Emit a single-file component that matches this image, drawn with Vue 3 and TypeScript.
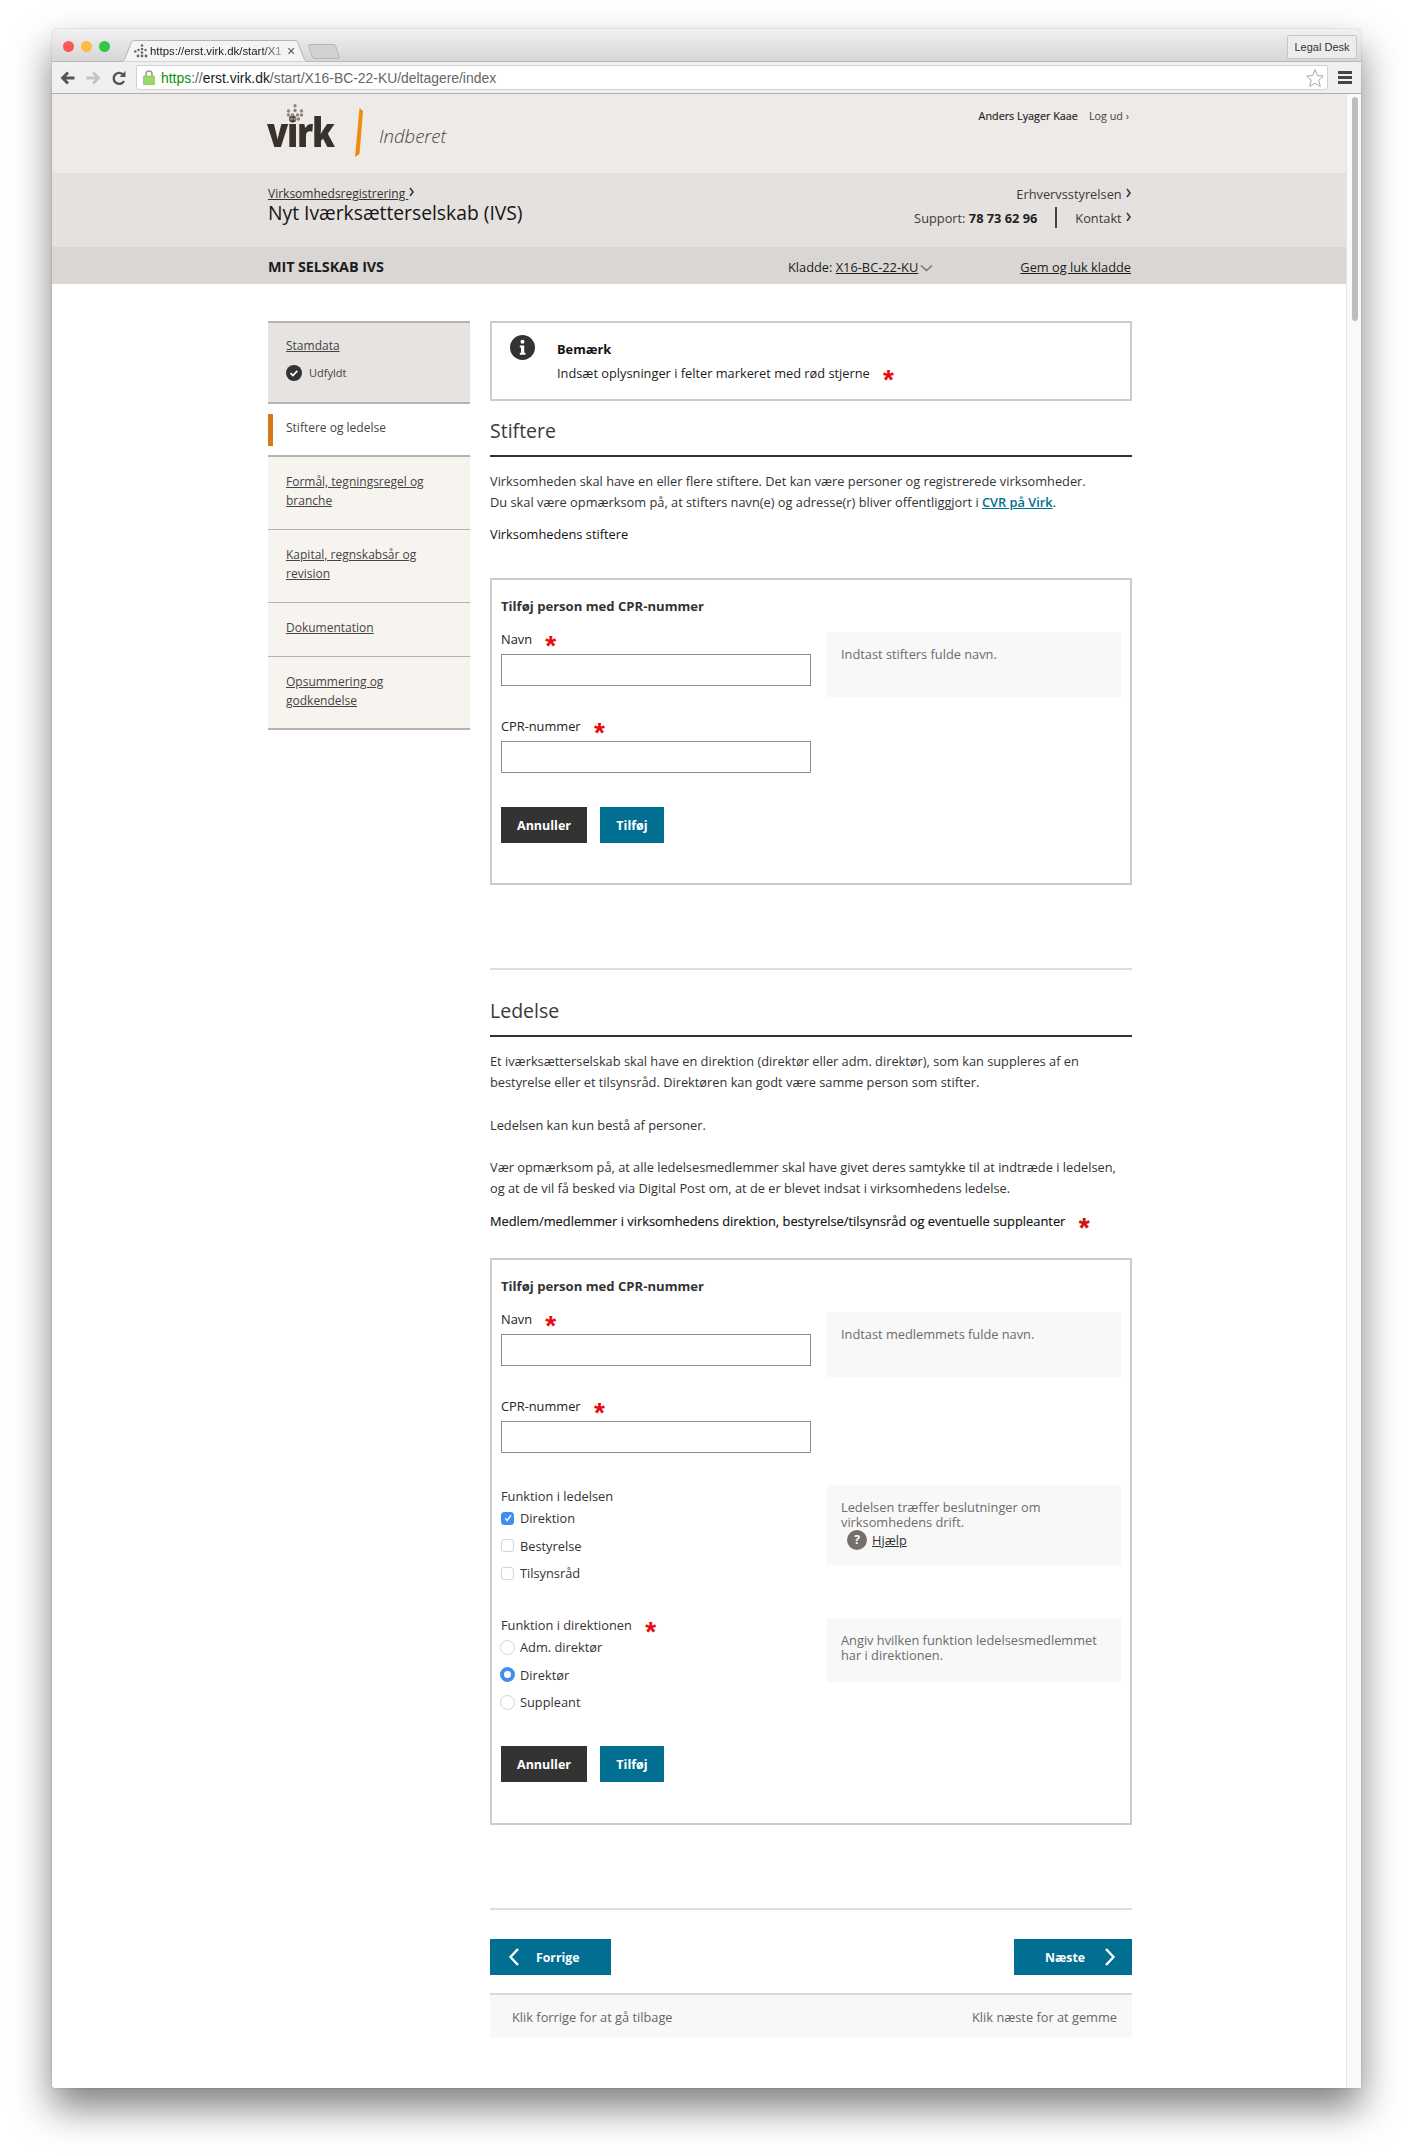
<template>
  <div class="stage">
    <div class="window">
      <div class="tabstrip">
        <div class="lights"><i class="red"></i><i class="yellow"></i><i class="green"></i></div>
        <div class="tab">
          <svg class="tab-bg" width="192" height="22" viewBox="0 0 192 22">
            <path d="M0 21.500h2c2 0 3-1 4-3L12 3c.6-1.600 1.600-2.500 3.500-2.500h160c2 0 3 1 3.500 2.500l6 15.500c1 2 2 3 4 3h3" fill="#f4f4f4" stroke="#b4b4b4" />
          </svg>
          <svg class="favicon" width="14" height="14" viewBox="0 0 14 14"><g fill="#666">
            <circle cx="8" cy="1.500" r="1.300" /><circle cx="8" cy="5" r="1.300" /><circle cx="4.500" cy="6" r="1.200" /><circle cx="11.500" cy="6" r="1.200" /><circle cx="1.300" cy="7.500" r="1.200" /><circle cx="8" cy="8.500" r="1.300" /><circle cx="4" cy="12" r="1.400" /><circle cx="8" cy="12" r="1.400" /><circle cx="12" cy="12" r="1.400" />
          </g></svg>
          <span class="tab-title">https://erst.virk.dk/start/X1</span>
          <span class="tab-close">×</span>
        </div>
        <div class="newtab"></div>
        <div class="legal">Legal Desk</div>
      </div>
      <div class="toolbar">
        <svg class="nav-icon" width="16" height="16" viewBox="0 0 16 16"><path d="M14.500 8H3M8 2.500 2.500 8 8 13.500" fill="none" stroke="#555" stroke-width="2.800" /></svg>
        <svg class="nav-icon fwd" width="16" height="16" viewBox="0 0 16 16"><path d="M1.500 8H13M8 2.500 13.500 8 8 13.500" fill="none" stroke="#c4c4c4" stroke-width="2.800" /></svg>
        <svg class="nav-icon reload" width="14" height="16" viewBox="0 0 14 16"><path d="M12 11a5.500 5.500 0 1 1-.6-6.200" fill="none" stroke="#555" stroke-width="2.400" /><path d="M13.500 1v6h-6z" fill="#555" /></svg>
        <div class="address">
          <svg width="12" height="15" viewBox="0 0 12 15"><path d="M3 7V4a3 3 0 0 1 6 0v3" fill="none" stroke="#9a9a9a" stroke-width="1.500" /><rect x=".5" y="6" width="11" height="9" rx="1" fill="#9bd968" stroke="#7cb84f" stroke-width=".6" /></svg>
          <span class="url"><span class="https">https</span><span class="muted">://</span>erst.virk.dk<span class="muted">/start/X16-BC-22-KU/deltagere/index</span></span>
          <svg class="star" width="18" height="20" viewBox="0 0 18 20"><path d="m9 1.500 2.400 6.100 6 .4-4.600 4.200 1.500 6.300L9 15.200l-5.300 3.300 1.500-6.300L.6 8l6-.4z" fill="#fff" stroke="#a8a8a8" /></svg>
        </div>
        <div class="menu"><i></i><i></i><i></i></div>
      </div>

      <div class="viewport">
        <div class="page">
          <header class="top">
            <div class="wrap top-row">
              <div class="logo">
                <div class="virk">
                  <span>virk</span>
                  <svg class="crown" width="20" height="17" viewBox="0 0 20 17"><g fill="#8d8578">
                    <circle cx="10" cy="1.800" r="1.700" /><circle cx="3.500" cy="7" r="1.700" /><circle cx="10" cy="6.500" r="1.700" /><circle cx="16.500" cy="7" r="1.700" /><circle cx="3.500" cy="11" r="1.700" /><circle cx="7.500" cy="11" r="1.700" /><circle cx="12.500" cy="11" r="1.700" /><circle cx="16.500" cy="11" r="1.700" /><circle cx="6.500" cy="15" r="1.700" /><circle cx="10" cy="15" r="1.700" /><circle cx="13.500" cy="15" r="1.700" />
                  </g></svg>
                </div>
                <svg class="slash" width="10" height="50" viewBox="0 0 10 50"><path d="M5.500 0 9 3 5.500 46 1 49z" fill="#ee8c11" /></svg>
                <span class="indberet">Indberet</span>
              </div>
              <div class="user"><b>Anders Lyager Kaae</b><span>Log ud ›</span></div>
            </div>
          </header>
          <div class="band">
            <div class="wrap band-row">
              <div>
                <div class="crumb"><a>Virksomhedsregistrering </a>
                  <svg class="chev" width="5" height="10" viewBox="0 0 5 10"><path d="m1 1 3 4-3 4" fill="none" stroke="#333" stroke-width="1.500" /></svg>
                </div>
                <div class="page-title">Nyt Iværksætterselskab (IVS)</div>
              </div>
              <div class="contact">
                <div class="erhverv">Erhvervsstyrelsen
                  <svg class="chev" width="5" height="10" viewBox="0 0 5 10"><path d="m1 1 3 4-3 4" fill="none" stroke="#333" stroke-width="1.500" /></svg>
                </div>
                <div class="support">
                  <span>Support: <b>78 73 62 96</b></span>
                  <i class="divider"></i>
                  <span>Kontakt
                    <svg class="chev" width="5" height="10" viewBox="0 0 5 10"><path d="m1 1 3 4-3 4" fill="none" stroke="#333" stroke-width="1.500" /></svg>
                  </span>
                </div>
              </div>
            </div>
          </div>
          <div class="company">
            <div class="wrap company-row">
              <b class="company-name">MIT SELSKAB IVS</b>
              <div class="draft">Kladde: <a>X16-BC-22-KU</a>
                <svg width="13" height="8" viewBox="0 0 13 8"><path d="m1 1.500 5.500 5 5.500-5" fill="none" stroke="#777" stroke-width="1.600" /></svg>
              </div>
              <a class="save">Gem og luk kladde</a>
            </div>
          </div>

          <div class="wrap body">
            <nav class="side">
              <div class="side-item done">
                <a>Stamdata</a>
                <div class="status">
                  <svg width="16" height="16" viewBox="0 0 16 16"><circle cx="8" cy="8" r="8" fill="#333" /><path d="m4.500 8.200 2.400 2.300 4.400-4.600" fill="none" stroke="#fff" stroke-width="1.700" /></svg>
                  <span>Udfyldt</span>
                </div>
              </div>
              <div class="side-item current"><span>Stiftere og ledelse</span></div>
              <div v-for="item in sideItems" :key="item.label" class="side-item todo" :class="item.size">
                <a>{{ item.label }}</a>
              </div>
            </nav>

            <main class="main">
              <section class="note">
                <svg class="info" width="25" height="25" viewBox="0 0 25 25"><circle cx="12.500" cy="12.500" r="12.500" fill="#333" /><circle cx="12.500" cy="6.800" r="2" fill="#fff" /><path d="M9.800 10.500h4.400v7.300h1.300v2H9.800v-2h1.200v-5.300H9.800z" fill="#fff" /></svg>
                <div>
                  <div class="note-title">Bemærk</div>
                  <div class="note-text">Indsæt oplysninger i felter markeret med rød stjerne <i class="req">*</i></div>
                </div>
              </section>

              <h2 class="first">Stiftere</h2>
              <div class="text t-stift">
                <p>Virksomheden skal have en eller flere stiftere. Det kan være personer og registrerede virksomheder.</p>
                <p>Du skal være opmærksom på, at stifters navn(e) og adresse(r) bliver offentliggjort i <a class="cvr">CVR på Virk</a>.</p>
              </div>
              <div class="sub">Virksomhedens stiftere</div>

              <form class="box box-a" @submit.prevent>
                <h3>Tilføj person med CPR-nummer</h3>
                <div class="row">
                  <div class="col">
                    <label>Navn <i class="req">*</i></label>
                    <input type="text" />
                    <label class="second">CPR-nummer <i class="req">*</i></label>
                    <input type="text" />
                  </div>
                  <div class="hint h-name">Indtast stifters fulde navn.</div>
                </div>
                <div class="actions">
                  <button class="dark">Annuller</button>
                  <button class="blue">Tilføj</button>
                </div>
              </form>

              <hr class="rule" />
              <h2 class="second-head">Ledelse</h2>
              <div class="text">
                <p>Et iværksætterselskab skal have en direktion (direktør eller adm. direktør), som kan suppleres af en</p>
                <p>bestyrelse eller et tilsynsråd. Direktøren kan godt være samme person som stifter.</p>
                <p class="gap">Ledelsen kan kun bestå af personer.</p>
                <p class="gap">Vær opmærksom på, at alle ledelsesmedlemmer skal have givet deres samtykke til at indtræde i ledelsen,</p>
                <p>og at de vil få besked via Digital Post om, at de er blevet indsat i virksomhedens ledelse.</p>
              </div>
              <div class="sub sub-b">Medlem/medlemmer i virksomhedens direktion, bestyrelse/tilsynsråd og eventuelle suppleanter <i class="req">*</i></div>

              <form class="box box-b" @submit.prevent>
                <h3>Tilføj person med CPR-nummer</h3>
                <div class="row">
                  <div class="col">
                    <label>Navn <i class="req">*</i></label>
                    <input type="text" />
                    <label class="second">CPR-nummer <i class="req">*</i></label>
                    <input type="text" />
                  </div>
                  <div class="hint h-name">Indtast medlemmets fulde navn.</div>
                </div>
                <div class="row r-func">
                  <div class="col">
                    <div class="group-label">Funktion i ledelsen</div>
                    <div v-for="opt in functions" :key="opt" class="option">
                      <span class="check" :class="{ on: opt === 'Direktion' }">
                        <svg v-if="opt === 'Direktion'" width="10" height="10" viewBox="0 0 10 10"><path d="m2.200 5.200 2 2.500 3.600-5.500" fill="none" stroke="#fff" stroke-width="1.300" /></svg>
                      </span>{{ opt }}
                    </div>
                  </div>
                  <div class="hint h-func">
                    Ledelsen træffer beslutninger om<br />virksomhedens drift.
                    <div class="help"><span class="q">?</span><a>Hjælp</a></div>
                  </div>
                </div>
                <div class="row r-dir">
                  <div class="col">
                    <div class="group-label">Funktion i direktionen <i class="req">*</i></div>
                    <div v-for="opt in roles" :key="opt" class="option">
                      <span class="radio" :class="{ on: opt === 'Direktør' }"></span>{{ opt }}
                    </div>
                  </div>
                  <div class="hint h-dir">Angiv hvilken funktion ledelsesmedlemmet<br />har i direktionen.</div>
                </div>
                <div class="actions a-b">
                  <button class="dark">Annuller</button>
                  <button class="blue">Tilføj</button>
                </div>
              </form>

              <hr class="rule rule-b" />
              <div class="pager">
                <button class="blue prev">
                  <svg width="12" height="20" viewBox="0 0 12 20"><path d="M10 2 2.500 10 10 18" fill="none" stroke="#fff" stroke-width="2.400" /></svg>
                  Forrige
                </button>
                <button class="blue next">
                  Næste
                  <svg width="12" height="20" viewBox="0 0 12 20"><path d="M2 2l7.500 8L2 18" fill="none" stroke="#fff" stroke-width="2.400" /></svg>
                </button>
              </div>
              <div class="pager-hint">
                <span>Klik forrige for at gå tilbage</span>
                <span>Klik næste for at gemme</span>
              </div>
            </main>
          </div>
        </div>
        <div class="scrollbar"><div class="thumb"></div></div>
      </div>
    </div>
  </div>
</template>

<script setup lang="ts">
interface SideItem {
  label: string
  size: 'tall' | 'short'
}

const sideItems: SideItem[] = [
  { label: 'Formål, tegningsregel og branche', size: 'tall' },
  { label: 'Kapital, regnskabsår og revision', size: 'tall' },
  { label: 'Dokumentation', size: 'short' },
  { label: 'Opsummering og godkendelse', size: 'tall' }
]

const functions: string[] = ['Direktion', 'Bestyrelse', 'Tilsynsråd']
const roles: string[] = ['Adm. direktør', 'Direktør', 'Suppleant']
</script>

<style>
html,
body {
  margin: 0;
  background: #fff;
}
</style>

<style scoped>
.stage {
  width: 1412px;
  height: 2156px;
  padding: 29px 51px 0 52px;
  box-sizing: border-box;
  overflow: hidden;
  font-family: "Open Sans", sans-serif;
  color: #1c1c1c;
}
.window {
  height: 2059px;
  display: flex;
  flex-direction: column;
  border-radius: 5px 5px 2px 2px;
  box-shadow: 0 20px 38px rgba(0, 0, 0, .5), 0 0 1px rgba(0, 0, 0, .5);
  background: #fff;
}
.tabstrip {
  position: relative;
  height: 33px;
  flex: none;
  border-radius: 5px 5px 0 0;
  background: linear-gradient(#f1f1f1, #d6d6d6);
  border-bottom: 1px solid #b8b8b8;
  box-sizing: border-box;
  font-family: "Liberation Sans", sans-serif;
}
.lights {
  position: absolute;
  left: 11px;
  top: 12px;
  display: flex;
  gap: 7px;
}
.lights i {
  width: 11px;
  height: 11px;
  border-radius: 50%;
}
.red { background: #fc5753; }
.yellow { background: #fdbc40; }
.green { background: #33c748; }
.tab {
  position: absolute;
  left: 67px;
  top: 11px;
  width: 192px;
  height: 22px;
  display: flex;
  align-items: center;
  padding-left: 15px;
  box-sizing: border-box;
}
.tab-bg {
  position: absolute;
  left: 0;
  top: 0;
}
.favicon,
.tab-title,
.tab-close {
  position: relative;
}
.tab-title {
  margin-left: 2px;
  width: 136px;
  overflow: hidden;
  white-space: nowrap;
  font-size: 11.400px;
  color: #222;
  -webkit-mask-image: linear-gradient(90deg, #000 82%, rgba(0, 0, 0, .25));
  mask-image: linear-gradient(90deg, #000 82%, rgba(0, 0, 0, .25));
}
.tab-close {
  margin-left: 1px;
  font-size: 14px;
  color: #555;
}
.newtab {
  position: absolute;
  left: 258px;
  top: 15px;
  width: 28px;
  height: 15px;
  border-radius: 3px;
  transform: skewX(18deg);
  background: #d2d2d2;
  border: 1px solid #b5b5b5;
  box-sizing: border-box;
}
.legal {
  position: absolute;
  right: 4px;
  top: 6px;
  width: 70px;
  height: 24px;
  border: 1px solid #c6c6c6;
  border-radius: 2px;
  background: #ececec;
  box-sizing: border-box;
  text-align: center;
  font-size: 11px;
  line-height: 22px;
  color: #333;
}
.toolbar {
  height: 32px;
  flex: none;
  display: flex;
  align-items: center;
  background: #f0f0f0;
  border-bottom: 1px solid #b0b0b0;
  box-sizing: border-box;
  font-family: "Liberation Sans", sans-serif;
}
.nav-icon {
  margin-left: 8px;
  flex: none;
}
.nav-icon.fwd { margin-left: 9px; }
.nav-icon.reload { margin-left: 11px; }
.address {
  margin-left: 10px;
  width: 1192px;
  height: 25px;
  flex: none;
  display: flex;
  align-items: center;
  background: #fff;
  border: 1px solid #d2d2d2;
  border-radius: 2px;
  box-sizing: border-box;
  padding-left: 6px;
}
.url {
  margin-left: 6px;
  padding-top: 1px;
  font-size: 13.900px;
  color: #1a1a1a;
}
.https { color: #0b8f0b; }
.muted { color: #666; }
.star { margin-left: auto; margin-right: 3px; }
.menu {
  margin-left: 10px;
  width: 14px;
  display: flex;
  flex-direction: column;
  gap: 2px;
}
.menu i {
  height: 3px;
  background: #444;
}
.viewport {
  flex: 1;
  min-height: 0;
  display: flex;
  overflow: hidden;
}
.page {
  width: 1294px;
  flex: none;
}
.scrollbar {
  flex: 1;
  background: #fafafa;
  border-left: 1px solid #e4e4e4;
  padding: 3px 3px 0 5px;
}
.thumb {
  height: 224px;
  border-radius: 4px;
  background: #bdbdbd;
}
.wrap {
  width: 864px;
  margin-left: 216px;
}
.top {
  height: 79px;
  background: #edeae7;
}
.top-row,
.band-row,
.company-row {
  display: flex;
  justify-content: space-between;
}
.band-row,
.company-row {
  padding-right: 1px;
  box-sizing: border-box;
}
.logo {
  display: flex;
  align-items: flex-start;
}
.virk {
  position: relative;
  width: 67px;
  height: 79px;
}
.virk span {
  position: absolute;
  left: -1px;
  top: 10px;
  font-size: 40px;
  line-height: 56px;
  font-weight: 800;
  letter-spacing: -1.500px;
  color: #39322c;
  transform: scaleX(.87);
  transform-origin: left;
}
.crown {
  position: absolute;
  left: 17px;
  top: 10px;
}
.slash {
  margin: 14px 0 0 19px;
}
.indberet {
  margin: 30px 0 0 15px;
  font-size: 18.500px;
  line-height: 24px;
  font-style: italic;
  font-weight: 300;
  color: #4a4540;
}
.user {
  display: flex;
  gap: 11px;
  padding: 14px 3px 0 0;
  font-size: 10.800px;
  line-height: 15px;
  color: #444;
}
.user b {
  font-weight: 400;
  color: #1c1c1c;
  -webkit-text-stroke: .15px #1c1c1c;
}
.band {
  height: 74px;
  background: #e4e1de;
}
.crumb {
  padding-top: 12px;
  font-size: 12px;
  line-height: 17px;
  color: #333;
}
.crumb a {
  text-decoration: underline;
  white-space: pre;
}
.chev {
  margin-left: 1px;
  vertical-align: 1px;
}
.page-title {
  margin-top: -2px;
  font-size: 19.300px;
  line-height: 25px;
  color: #161616;
}
.contact {
  padding-top: 12px;
  text-align: right;
  font-size: 12.800px;
  line-height: 18px;
  color: #3e3a37;
}
.support {
  margin-top: 4px;
  display: flex;
  justify-content: flex-end;
  align-items: center;
  gap: 18px;
}
.support b { color: #222; }
.divider {
  width: 2px;
  height: 21px;
  background: #444;
}
.company {
  height: 37px;
  background: #d9d6d3;
}
.company-row {
  align-items: center;
  height: 37px;
  padding-top: 2px;
  font-size: 12.800px;
  color: #1c1c1c;
}
.company-name {
  width: 520px;
  margin-top: -1px;
  font-size: 14.400px;
  letter-spacing: -.1px;
}
.draft {
  margin-right: auto;
  white-space: nowrap;
}
.draft a,
.save {
  text-decoration: underline;
}
.draft svg {
  margin-left: 2px;
}
.body {
  display: flex;
  gap: 20px;
  padding-top: 37px;
}
.side {
  width: 202px;
  flex: none;
  font-size: 12px;
  line-height: 18.500px;
  color: #444;
}
.side-item {
  box-sizing: border-box;
  padding: 14px 18px 0;
  border-bottom: 1px solid #b5b3b0;
}
.side a {
  text-decoration: underline;
}
.done {
  height: 83px;
  background: #e6e3e0;
  border-top: 2px solid #b5b3b0;
  border-bottom-width: 2px;
}
.status {
  display: flex;
  align-items: center;
  gap: 7px;
  margin-top: 8px;
  font-size: 11px;
}
.current {
  position: relative;
  height: 53px;
  padding-top: 15px;
  border-bottom-width: 2px;
}
.current::before {
  content: "";
  position: absolute;
  left: 0;
  top: 10px;
  width: 5px;
  height: 32px;
  background: #d57a18;
}
.todo { background: #f7f4f0; }
.tall { height: 73px; padding-top: 16px; }
.short { height: 54px; padding-top: 16px; }
.side-item:last-child { border-bottom-width: 2px; }
.main {
  width: 642px;
  flex: none;
  font-size: 12.800px;
}
.note {
  height: 80px;
  display: flex;
  gap: 22px;
  padding: 12px 18px 0;
  border: 2px solid #ccc;
  box-sizing: border-box;
}
.info { flex: none; }
.note-title {
  margin-top: 5px;
  font-weight: 700;
  line-height: 18px;
  color: #111;
}
.note-text {
  margin-top: 6px;
  line-height: 18px;
  color: #1c1c1c;
}
.req {
  display: inline-block;
  margin-left: 10px;
  font-family: "Liberation Sans", sans-serif;
  font-style: normal;
  font-weight: 700;
  font-size: 28px;
  line-height: 0;
  color: #e40d0d;
  vertical-align: -11px;
}
h2 {
  margin: 0;
  height: 48px;
  font-size: 19.500px;
  line-height: 28px;
  font-weight: 400;
  color: #3a3a3a;
  border-bottom: 2px solid #333;
  box-sizing: border-box;
  padding-top: 8px;
}
h2.first {
  margin-top: 7.500px;
}
h2.second-head {
  margin-top: 19px;
}
p {
  margin: 0;
}
.text {
  padding-top: 14px;
  line-height: 21px;
  color: #333;
}
.gap {
  margin-top: 21.500px;
}
.cvr {
  color: #00708f;
  text-decoration: underline;
  font-weight: 600;
}
.sub {
  margin-top: 10px;
  line-height: 22px;
  color: #111;
}
.sub-b {
  margin-top: 11px;
  font-size: 12.850px;
  -webkit-text-stroke: .15px #111;
}
.box {
  margin-top: 33.500px;
  border: 2px solid #ccc;
  box-sizing: border-box;
  padding: 14px 9px 0;
}
.box-a { height: 307px; }
.box-b { height: 567px; margin-top: 26px; }
h3 {
  margin: 0;
  font-size: 13.100px;
  line-height: 24px;
  font-weight: 700;
  color: #333;
}
.row {
  display: flex;
  gap: 16px;
  align-items: flex-start;
}
.col {
  width: 310px;
  flex: none;
}
label {
  display: block;
  margin-top: 11px;
  height: 25px;
  line-height: 21px;
  color: #222;
}
label.second {
  margin-top: 28px;
  height: 27px;
  line-height: 24px;
}
input[type="text"] {
  display: block;
  width: 100%;
  height: 32px;
  box-sizing: border-box;
  border: 1px solid #8e8e8e;
  border-top-width: 1.500px;
  background: #fff;
}
.hint {
  width: 294px;
  box-sizing: border-box;
  background: #f8f8f8;
  padding: 15px 14px 0;
  line-height: 15px;
  color: #6b6b6b;
}
.h-name {
  margin-top: 14px;
  height: 65px;
}
.r-func { margin-top: 33px; }
.r-dir { margin-top: 24.500px; }
.h-func { height: 80px; }
.h-dir { height: 64px; margin-top: 3px; }
.r-func .hint {
  margin-top: -1px;
}
.help {
  display: flex;
  align-items: center;
  margin: 0 0 0 6px;
  color: #333;
}
.help a { text-decoration: underline; }
.q {
  width: 20px;
  height: 20px;
  margin-right: 5px;
  border-radius: 50%;
  background: #77706a;
  color: #fff;
  font-weight: 700;
  font-size: 12px;
  line-height: 20px;
  text-align: center;
}
.group-label {
  margin-bottom: 2px;
  line-height: 20px;
  color: #333;
}
.option {
  display: flex;
  align-items: center;
  height: 20px;
  margin-bottom: 7.500px;
  color: #333;
}
.check,
.radio {
  width: 13px;
  height: 13px;
  margin-right: 6px;
  flex: none;
  box-sizing: border-box;
  background: #fff;
  border: 1px solid #d4d4d4;
  display: flex;
  align-items: center;
  justify-content: center;
}
.check { border-radius: 3px; }
.radio {
  border-radius: 50%;
  width: 15px;
  height: 15px;
  margin-left: -1px;
  margin-right: 5px;
}
.check.on {
  background: #3f8ff1;
  border-color: #3f8ff1;
}
.radio.on {
  border: 4.500px solid #3f8ff1;
}
button {
  height: 36px;
  border: 0;
  padding: 0;
  font-family: inherit;
  font-size: 12.500px;
  font-weight: 700;
  color: #fff;
}
.actions {
  display: flex;
  gap: 13px;
  margin-top: 34px;
}
.a-b { margin-top: 26.500px; }
.dark {
  width: 86px;
  background: #333;
}
.blue {
  width: 64px;
  background: #006f91;
}
.rule {
  margin: 83px 0 0;
  border: 0;
  border-top: 2px solid #dedede;
  height: 0;
}
.pager {
  display: flex;
  justify-content: space-between;
  margin-top: 29px;
}
.prev,
.next {
  display: flex;
  align-items: center;
  font-size: 12.300px;
}
.prev {
  width: 121px;
  gap: 16px;
  padding-left: 18px;
}
.next {
  width: 118px;
  justify-content: flex-end;
  gap: 19px;
  padding-right: 16px;
}
.pager-hint {
  margin-top: 18px;
  height: 45px;
  display: flex;
  justify-content: space-between;
  align-items: center;
  padding: 0 15px 0 22px;
  background: #f8f8f8;
  border-top: 2px solid #d8d8d8;
  box-sizing: border-box;
  color: #666;
}
</style>
